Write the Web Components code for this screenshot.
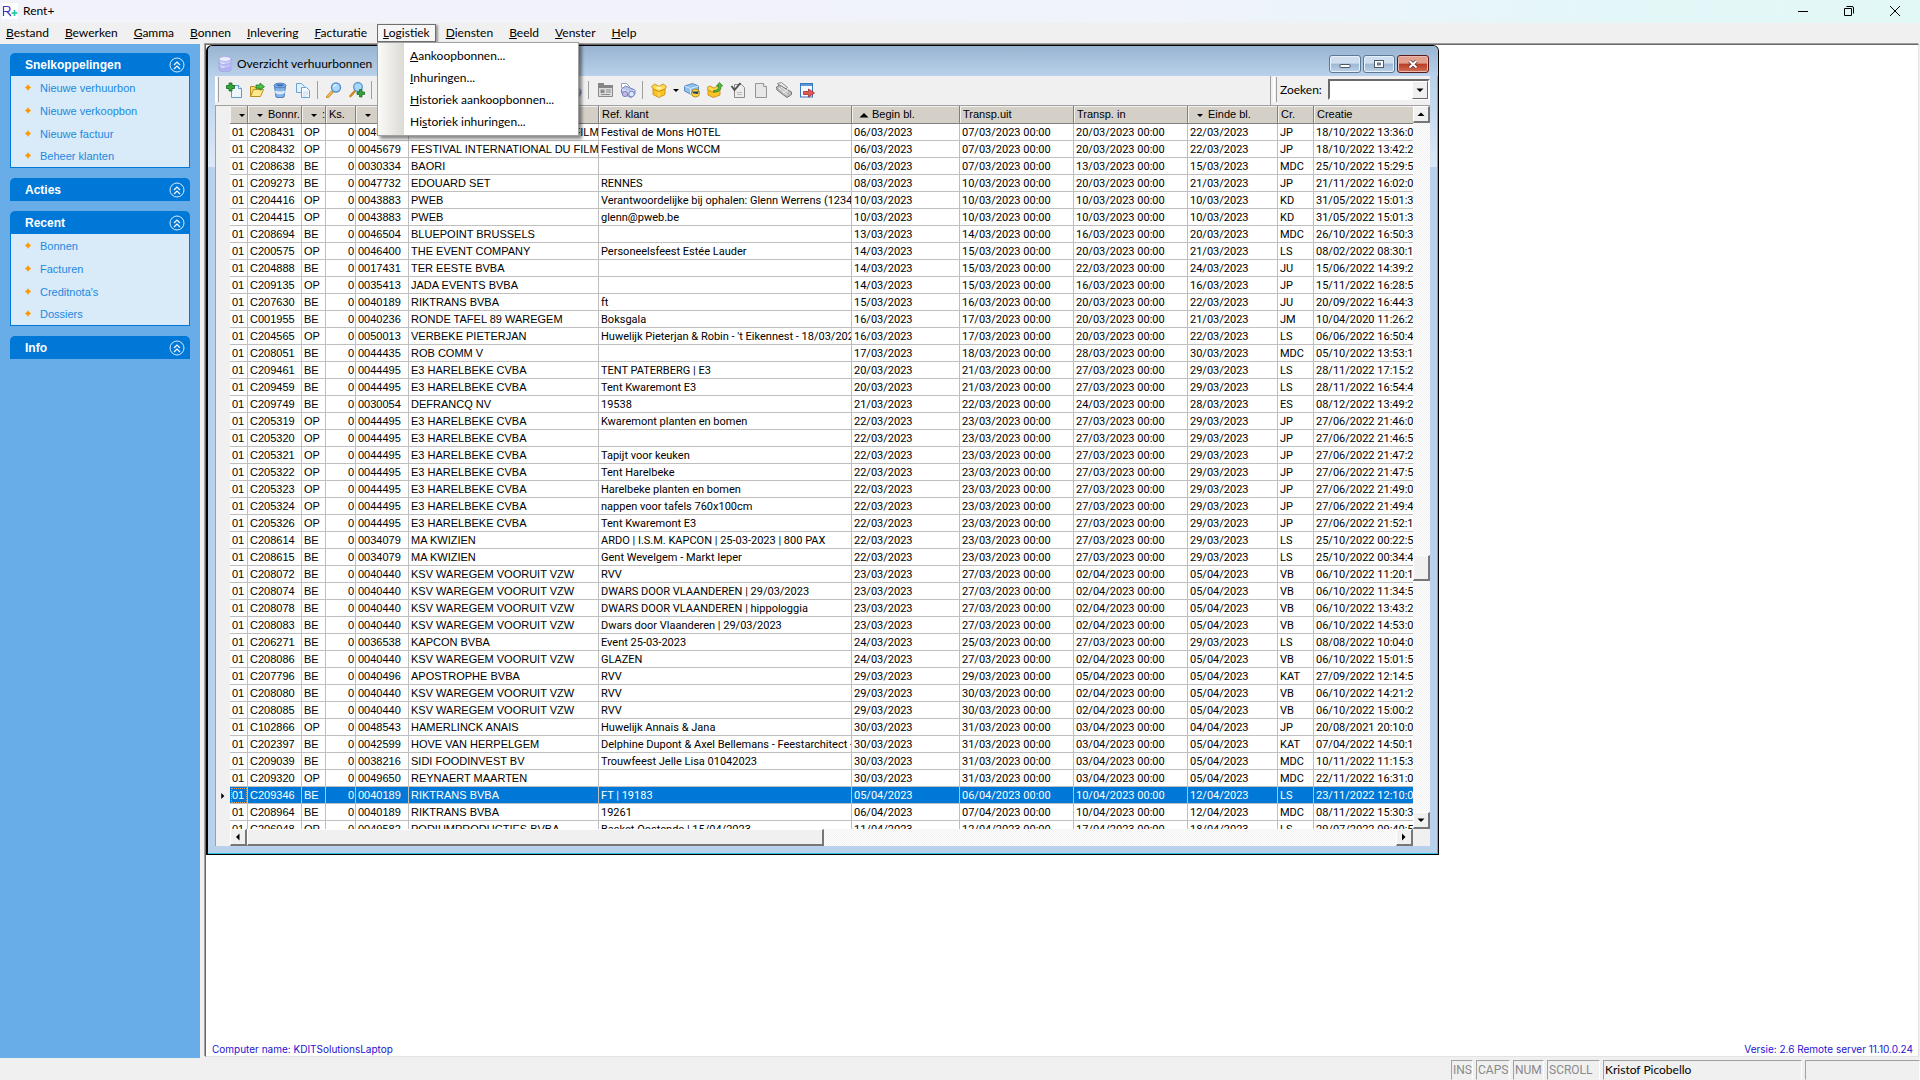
<!DOCTYPE html>
<html lang="nl">
<head>
<meta charset="utf-8">
<title>Rent+</title>
<style>
html, body { height: 100%; margin: 0; }
body { font: 12px/16px Lato, "Liberation Sans", sans-serif; color: #000; background: #f0f0f0; overflow: hidden; }
</style>
</head>
<body>
<rent-app></rent-app>
<script>
const define = (name, html, init) => {
  const template = document.createElement('template');
  template.innerHTML = html;
  customElements.define(name, class extends HTMLElement {
    constructor() {
      super();
      this.attachShadow({ mode: 'open' }).append(template.content.cloneNode(true));
    }
    connectedCallback() { if (init && !this.ready) { this.ready = true; init(this, this.shadowRoot); } }
  });
};

/* ---------- icons ---------- */
const ICONS = {
  logo: '<rect width="16" height="16" fill="#fff"/><g fill="none" stroke-width="1.2"><path d="M1.5 13V3.500h4a2.500 2.500 0 0 1 0 5h-4M5 8.500L9 13" stroke="#3b35c8"/><path d="M9.500 10h6M12.500 7v6" stroke="#1fc3a0" stroke-width="1.600"/></g>',
  db: '<g stroke="#9a9ce0" stroke-width=".6"><path d="M2 11v2.500c0 1.300 2.600 2.300 6 2.300s6-1 6-2.300V11z" fill="#b3b4f4"/><path d="M2 7v3c0 1.300 2.600 2.300 6 2.300s6-1 6-2.300V7z" fill="#bfc0f7"/><path d="M2 3v3c0 1.300 2.600 2.300 6 2.300s6-1 6-2.300V3z" fill="#c9caf9"/><ellipse cx="8" cy="3" rx="6" ry="2.400" fill="#ecedff"/></g><path d="M3.500 6.500c1 .7 2.500 1 4 1M3.500 10.500c1 .7 2.500 1 4 1" fill="none" stroke="#f3f3ff"/>',
  add: '<path d="M5.500 3.500h7l3 3v9h-10z" fill="#eef6fd" stroke="#5f9bd0"/><path d="M12.500 3.500v3h3" fill="#fff" stroke="#5f9bd0"/><path d="M3 1h3v2.500h2.500v3H6V9H3V6.500H.5v-3H3z" fill="#32a83a" stroke="#13661b" stroke-width=".8"/>',
  open: '<path d="M1.500 14.500V4.500h4l1 1.500h5v2" fill="#f7dc6c" stroke="#b78f1c"/><path d="M1.500 14.500l3-7h10l-3 7z" fill="#ffe98c" stroke="#b78f1c"/><path d="M7 3h4V1l4.500 3.700L11 8.200V6.200H7z" fill="#4fc04a" stroke="#1b7a22" stroke-width=".8"/>',
  bin: '<path d="M2.500 4l1.500 11c2 1 6 1 8 0l1.500-11z" fill="#86b4e8" stroke="#4577b8"/><path d="M3 8.500c3 1.200 7 1.200 10 0l-.4 3c-3 1-6 1-9.200 0z" fill="#dcebfa"/><ellipse cx="8" cy="3.500" rx="6" ry="2.300" fill="#8cbaf0" stroke="#4577b8"/><ellipse cx="8" cy="3.300" rx="4" ry="1.100" fill="#356cb5"/>',
  copy: '<path d="M1.500 1.500h5l3 3v6h-8z" fill="#e4f0fb" stroke="#6ba2d6"/><path d="M6.500 5.500h5l3 3v7h-8z" fill="#f3f9ff" stroke="#6ba2d6"/><path d="M8 10h5M8 12h5M8 14h3" stroke="#a9cbea" stroke-width=".7"/>',
  find: '<path d="M6.500 9.500L1.500 15" stroke="#c98a2c" stroke-width="3" stroke-linecap="round"/><path d="M6.500 9.500L1.500 15" stroke="#f5bd54" stroke-width="1.500"/><circle cx="10" cy="5.500" r="4.500" fill="#a9d8fa" stroke="#5791cc" stroke-width="1.400"/><path d="M7.500 5a3 3 0 0 1 3-2.500" stroke="#fff" fill="none"/>',
  findadd: '<path d="M6 9L1.500 14" stroke="#c98a2c" stroke-width="2.600" stroke-linecap="round"/><circle cx="9" cy="5" r="4.300" fill="#a9d8fa" stroke="#5791cc" stroke-width="1.300"/><path d="M10.500 7.500h2.500V10h2.500v2.500H13V15h-2.500v-2.500H8V10h2.500z" fill="#32a83a" stroke="#13661b" stroke-width=".7"/>',
  card: '<path d="M1.500 3.500V1.500h5v2h9v11h-14z" fill="#dcdcdc" stroke="#8a8a8a"/><path d="M1 1h6v2h9v3H1z" fill="#858585"/><rect x="3.500" y="7.500" width="4" height="3.500" fill="#8d8d8d"/><path d="M9 8h5M9 10h5M4 12.500h9" stroke="#8d8d8d"/>',
  print: '<path d="M1.500 1.500h5l3 3-4 3-4-2z" fill="#fff" stroke="#8b9fcb"/><path d="M1.500 7l4-3 9.500 4v4l-4 3.500L1.500 11z" fill="#b9c6ee" stroke="#7383bd"/><path d="M2 7.500l8.500 3.500 4-3" fill="none" stroke="#eef2ff"/><circle cx="5" cy="12" r="2.600" fill="#cdb6e4" stroke="#7383bd"/><circle cx="11.500" cy="12" r="2.800" fill="#dfe7fb" stroke="#7383bd"/>',
  box: '<path d="M2 7l6 2 6-2v5.500L8 15.500l-6-3z" fill="#f9c526" stroke="#c5830b" stroke-width=".8"/><path d="M2 7L.5 4.500 4 2l4 2.500L12 2l3.500 2.500L14 7 8 9.500z" fill="#ffd94d" stroke="#c5830b" stroke-width=".8"/><path d="M4 6l4-1.500L12 6 8 7.500z" fill="#fff5b5"/><path d="M8 10v5" stroke="#ffe583"/>',
  truck: '<path d="M.5 4l8-2.500 6 2.500v5l-8 3-6-3z" fill="#8fc1ee" stroke="#3f78b5" stroke-width=".8"/><path d="M.5 4l6 2.500 8-2.500M6.500 6.500V12" fill="none" stroke="#d7ebfb"/><circle cx="11.500" cy="11" r="4" fill="#ffd43c" stroke="#a87908" stroke-width=".8"/><path d="M8 9.500h7l-1.500 2.500h-2L11 11l-1 1z" fill="#17407e"/>',
  boxup: '<path d="M1 8l5.500 2L13 8v5l-6.500 2.500L1 13z" fill="#f9c526" stroke="#c5830b" stroke-width=".8"/><path d="M1 8L0 5.500 3 4l4 2 4-2 3 2-1 2-6.500 2.500z" fill="#ffd94d" stroke="#c5830b" stroke-width=".8"/><path d="M6.500 8.500c4 0 5-1.500 5-4.500H9.500L12.500.5 15.700 4H14c0 4-2.500 6.500-7.500 6z" fill="#53bd42" stroke="#217b1e" stroke-width=".7"/>',
  check: '<path d="M4.500 2.500h7l3 3v10h-10z" fill="#ededed" stroke="#8b8b8b"/><path d="M1.500 4l3 4 6-7" fill="none" stroke="#4e4e4e" stroke-width="1.800"/><path d="M7 10.500h5M7 12.500h5" stroke="#bbb"/>',
  page: '<path d="M2.500 1.500h8l3 3v11h-11z" fill="#e7e7e7" stroke="#969696"/><path d="M10.500 1.500v3h3" fill="#fff" stroke="#969696"/>',
  fax: '<path d="M1.500 1.500l4-1 6 5-4 3z" fill="#eee" stroke="#888"/><path d="M.5 5l3-2L15.500 10v2.500l-4.500 3L1 8z" fill="#bdbdbd" stroke="#737373"/><path d="M3 6l8 6.500M5 5l7 5M7 11l5-3.500" stroke="#f1f1f1"/>',
  exit: '<rect x="1.500" y="1.500" width="12" height="13.500" fill="#f4f9ff" stroke="#3b75bd"/><path d="M2 3h11" stroke="#5a97dd" stroke-width="2"/><path d="M4.500 9.500h5V7l6 4-6 4v-2.500h-5z" fill="#e25a54" stroke="#a62a27" stroke-width=".8"/>',
  chev: '<circle cx="8" cy="8" r="7" fill="none" stroke="#d8ecff"/><path d="M5 8l3-3 3 3M5 12l3-3 3 3" fill="none" stroke="#fff" stroke-width="1.200"/>',
  bullet: '<path d="M8 4.500l1.200 1.800L11 7.500 9.200 8.700 8 10.500 6.800 8.700 5 7.500l1.800-1.200z" fill="#ff9800" stroke="#ff9800" stroke-width=".3"/>',
  min: '<path d="M3 8.500h10" stroke="#000"/>',
  restore: '<path d="M3.500 5.500h7v7h-7z" fill="none" stroke="#000"/><path d="M5.500 3.500h5.500a1.500 1.500 0 0 1 1.500 1.500v5.500" fill="none" stroke="#000"/>',
  close: '<path d="M3 3l10 10M13 3L3 13" stroke="#000"/>',
  wmin: '<rect x="3" y="8.500" width="10" height="3" rx=".5" fill="#fff" stroke="#4b5668"/>',
  wmax: '<rect x="3.500" y="4.500" width="9" height="7" fill="#fff" stroke="#4b5668"/><rect x="6.500" y="7" width="3" height="2" fill="#8ea7c4" stroke="#4b5668" stroke-width=".8"/>',
  wclose: '<path d="M4.500 5l7 6.500M11.500 5l-7 6.500" stroke="#5b3038" stroke-width="3.600"/><path d="M4.500 5l7 6.500M11.500 5l-7 6.500" stroke="#fff" stroke-width="2"/>',
  down: '<path d="M5 7h6L8 10z" fill="#000"/>',
  sortup: '<path d="M3.500 10.500h9L8 6z" fill="#000"/>',
  arrup: '<path d="M4.500 10h7L8 6.500z" fill="#000"/>',
  arrdown: '<path d="M4.500 6.500h7L8 10z" fill="#000"/>',
  arrleft: '<path d="M9.500 4.500v7L6 8z" fill="#000"/>',
  arrright: '<path d="M6 4.500v7L9.500 8z" fill="#000"/>'
};
define('app-icon', `<style>:host{display:block;width:16px;height:16px;flex:none}svg{display:block;width:100%;height:100%}</style>`,
  (el, root) => root.append(new DOMParser().parseFromString(
    `<svg xmlns="http://www.w3.org/2000/svg" viewBox="0 0 16 16" aria-hidden="true">${ICONS[el.getAttribute('name')]}</svg>`, 'image/svg+xml').documentElement));

/* ---------- main window title ---------- */
define('title-bar', `<style>
:host{display:flex;align-items:center;height:23px;padding:0 2px 1px 0;box-sizing:border-box;background:linear-gradient(90deg,#f1f2fa 0 35%,#f0f3fa 60%,#e3f7f8 85%,#e2f8f6)}
.name{display:flex;align-items:center;gap:5px;padding-left:2px;flex:1}
.controls{display:flex}
button{width:46px;height:22px;border:0;background:none;display:grid;place-items:center;padding:0}
</style>
<div class="name"><app-icon name="logo"></app-icon><span>Rent+</span></div>
<div class="controls"><button aria-label="Minimaliseren"><app-icon name="min"></app-icon></button><button aria-label="Herstellen"><app-icon name="restore"></app-icon></button><button aria-label="Sluiten"><app-icon name="close"></app-icon></button></div>`);

/* ---------- menu bar ---------- */
define('menu-item', `<style>
:host{display:block;position:relative}
button{font:inherit;color:inherit;height:18px;line-height:16px;padding:0 5px;border:1px solid transparent;background:none;display:block;white-space:nowrap}
:host([open]) button{background:#f6f6f6;border-color:#6e6e6e;box-shadow:2px 1px 2px #999}
</style><button><slot></slot></button><slot name="menu"></slot>`);
define('menu-popup', `<style>
:host{position:absolute;left:0;top:18px;z-index:10;width:200px;border:1px solid #a0a0a0;background:linear-gradient(90deg,#fafaf8,#dcdad4 26px,#fff 26px);box-shadow:3px 3px 3px rgba(0,0,0,.45);padding:2px 0}
</style><slot></slot>`);
define('menu-option', `<style>
:host{display:block}
button{font:inherit;color:inherit;display:block;width:100%;height:22px;border:0;background:none;text-align:left;padding:0 0 0 32px}
</style><button><slot></slot></button>`);
define('menu-bar', `<style>
:host{display:flex;gap:4px;height:20px;background:#f0f0f0;align-items:center;border-bottom:1px solid #f0f0f0;box-sizing:border-box}
</style>
<menu-item><u>B</u>estand</menu-item><menu-item><u>B</u>ewerken</menu-item><menu-item><u>G</u>amma</menu-item><menu-item><u>B</u>onnen</menu-item><menu-item><u>I</u>nlevering</menu-item><menu-item><u>F</u>acturatie</menu-item>
<menu-item open><u>L</u>ogistiek
<menu-popup slot="menu"><menu-option><u>A</u>ankoopbonnen...</menu-option><menu-option><u>I</u>nhuringen...</menu-option><menu-option><u>H</u>istoriek aankoopbonnen...</menu-option><menu-option>Hi<u>s</u>toriek inhuringen...</menu-option></menu-popup></menu-item>
<menu-item><u>D</u>iensten</menu-item><menu-item><u>B</u>eeld</menu-item><menu-item><u>V</u>enster</menu-item><menu-item><u>H</u>elp</menu-item>`);

/* ---------- side panel ---------- */
define('side-group', `<style>
:host{display:block;font-family:"Liberation Sans",sans-serif}
header{display:flex;align-items:center;height:23px;padding:0 5px 0 15px;background:#0078d7;border-radius:5px 5px 0 0}
h2{flex:1;margin:0;font-size:12px;line-height:16px;color:#fff}
button{border:0;padding:0;background:none}
ul{margin:0;padding:0;list-style:none;border:1px solid #0078d7;border-top:0;background:#d9eaf8}
ul:empty{display:none}
li{display:flex;align-items:center;gap:4px;height:23px;padding-left:9px}
li:last-child{height:22px}
a{font-size:11px;line-height:16px;color:#2089df;text-decoration:none}
</style><header><h2></h2><button aria-label="Inklappen"><app-icon name="chev"></app-icon></button></header><ul></ul>`,
  (el, root) => {
    root.querySelector('h2').textContent = el.getAttribute('label');
    const items = el.getAttribute('items');
    if (items) root.querySelector('ul').innerHTML = items.split('|').map(t => `<li><app-icon name="bullet"></app-icon><a href="#">${t}</a></li>`).join('');
  });
define('side-panel', `<style>
:host{display:flex;flex-direction:column;gap:10px;width:200px;box-sizing:border-box;padding:9px 10px;background:#68ade8;flex:none}
</style>
<side-group label="Snelkoppelingen" items="Nieuwe verhuurbon|Nieuwe verkoopbon|Nieuwe factuur|Beheer klanten"></side-group>
<side-group label="Acties"></side-group>
<side-group label="Recent" items="Bonnen|Facturen|Creditnota's|Dossiers"></side-group>
<side-group label="Info"></side-group>`);

/* ---------- toolbar ---------- */
define('tool-bar', `<style>
:host{display:flex;height:29px;background:#f0f0f0}
.tools{display:flex;flex:1;align-items:center;padding:0 0 2px 2px}
.grip{width:1px;height:25px;border:solid #a0a0a0;border-width:0 1px 0 0;margin-right:3px;box-shadow:-2px 0 #fff}
.sep{width:1px;height:18px;margin:0 4px 0 3px;background:#a0a0a0}
button{width:23px;height:24px;padding:0;border:0;background:none;display:grid;place-items:center;place-content:center}
.rest{width:209px;display:flex;justify-content:flex-end}
.split{width:24px}
.drop{width:9px;overflow:hidden}
form{display:flex;align-items:center;width:160px;border-left:1px solid #a0a0a0;box-sizing:border-box;padding:0 0 2px 4px;margin:0}
form label{padding-right:5px;flex:1}
.combo{width:102px;height:21px;display:grid;box-sizing:border-box;border:2px solid;border-color:#6a6a6a #fff #fff #6a6a6a;background:#fff}
select{appearance:none;grid-area:1/1;border:0;background:#fff;font:inherit;padding:0 4px;border-radius:0;min-width:0}
.arrow{grid-area:1/1;justify-self:end;width:16px;box-sizing:border-box;background:#f0f0f0;border:1px solid;border-color:#fff #696969 #696969 #fff;display:grid;place-items:center;place-content:center;pointer-events:none}
</style>
<div class="tools"><span class="grip"></span>
<button aria-label="Nieuw"><app-icon name="add"></app-icon></button><button aria-label="Openen"><app-icon name="open"></app-icon></button><button aria-label="Verwijderen"><app-icon name="bin"></app-icon></button><button aria-label="Kopiëren"><app-icon name="copy"></app-icon></button><span class="sep"></span>
<button aria-label="Zoeken"><app-icon name="find"></app-icon></button><button aria-label="Zoeken en toevoegen"><app-icon name="findadd"></app-icon></button><span class="sep"></span>
<div class="rest"><button aria-label="Afdrukken"><app-icon name="print"></app-icon></button></div><span class="sep"></span>
<button aria-label="Kaart"><app-icon name="card"></app-icon></button><button aria-label="Alles afdrukken"><app-icon name="print"></app-icon></button><span class="sep"></span>
<button class="split" aria-label="Levering"><app-icon name="box"></app-icon></button><button class="drop" aria-label="Meer"><app-icon name="down"></app-icon></button><button aria-label="Transport"><app-icon name="truck"></app-icon></button><button aria-label="Retour"><app-icon name="boxup"></app-icon></button><button aria-label="Controle"><app-icon name="check"></app-icon></button><button aria-label="Document"><app-icon name="page"></app-icon></button><button aria-label="Fax"><app-icon name="fax"></app-icon></button><button aria-label="Afsluiten"><app-icon name="exit"></app-icon></button>
</div>
<form><span class="grip"></span><label for="q">Zoeken:</label><div class="combo"><select id="q"><option></option></select><span class="arrow"><app-icon name="arrdown"></app-icon></span></div></form>`);

/* ---------- scroll bars ---------- */
define('scroll-bar', `<style>
:host{display:flex;background:conic-gradient(#f0f0f0 25%,#fff 0 50%,#f0f0f0 0 75%,#fff 0) 0 0/2px 2px}
:host([vertical]){flex-direction:column}
button,i{flex:none;box-sizing:border-box;width:17px;height:17px;padding:0;background:#f0f0f0;border:solid;border-width:1px 2px 2px 1px;border-color:#fff #777 #777 #fff;display:grid;place-items:center;place-content:center;overflow:hidden}
.before{flex:var(--before)}.thumb{flex:var(--thumb);width:auto;height:auto}.after{flex:var(--after)}
span{min-width:0;min-height:0}
</style><button aria-label="Terug"><app-icon></app-icon></button><span class="before"></span><i class="thumb"></i><span class="after"></span><button aria-label="Verder"><app-icon></app-icon></button>`,
  (el, root) => {
    const v = el.hasAttribute('vertical');
    root.querySelectorAll('button').forEach((b, i) => b.innerHTML = `<app-icon name="${v ? ['arrup', 'arrdown'][i] : ['arrleft', 'arrright'][i]}"></app-icon>`);
  });

/* ---------- data grid ---------- */
const E3 = '0044495;E3 HARELBEKE CVBA', KSV = '0040440;KSV WAREGEM VOORUIT VZW', FIF = '0045679;FESTIVAL INTERNATIONAL DU FILM';
const ROWS = `C208431;OP;${FIF};Festival de Mons HOTEL;06/03;07/03;20/03;22/03;JP;18/10/2022 13:36:0
C208432;OP;${FIF};Festival de Mons WCCM;06/03;07/03;20/03;22/03;JP;18/10/2022 13:42:2
C208638;BE;0030334;BAORI;;06/03;07/03;13/03;15/03;MDC;25/10/2022 15:29:5
C209273;BE;0047732;EDOUARD SET;RENNES;08/03;10/03;20/03;21/03;JP;21/11/2022 16:02:0
C204416;OP;0043883;PWEB;Verantwoordelijke bij ophalen: Glenn Werrens (12345;10/03;10/03;10/03;10/03;KD;31/05/2022 15:01:3
C204415;OP;0043883;PWEB;glenn@pweb.be;10/03;10/03;10/03;10/03;KD;31/05/2022 15:01:3
C208694;BE;0046504;BLUEPOINT BRUSSELS;;13/03;14/03;16/03;20/03;MDC;26/10/2022 16:50:3
C200575;OP;0046400;THE EVENT COMPANY;Personeelsfeest Estée Lauder;14/03;15/03;20/03;21/03;LS;08/02/2022 08:30:1
C204888;BE;0017431;TER EESTE BVBA;;14/03;15/03;22/03;24/03;JU;15/06/2022 14:39:2
C209135;OP;0035413;JADA EVENTS BVBA;;14/03;15/03;16/03;16/03;JP;15/11/2022 16:28:5
C207630;BE;0040189;RIKTRANS BVBA;ft;15/03;16/03;20/03;22/03;JU;20/09/2022 16:44:3
C001955;BE;0040236;RONDE TAFEL 89 WAREGEM;Boksgala;16/03;17/03;20/03;21/03;JM;10/04/2020 11:26:2
C204565;OP;0050013;VERBEKE PIETERJAN;Huwelijk Pieterjan & Robin - 't Eikennest - 18/03/202;16/03;17/03;20/03;22/03;LS;06/06/2022 16:50:4
C208051;BE;0044435;ROB COMM V;;17/03;18/03;28/03;30/03;MDC;05/10/2022 13:53:1
C209461;BE;${E3};TENT PATERBERG | E3;20/03;21/03;27/03;29/03;LS;28/11/2022 17:15:2
C209459;BE;${E3};Tent Kwaremont E3;20/03;21/03;27/03;29/03;LS;28/11/2022 16:54:4
C209749;BE;0030054;DEFRANCQ NV;19538;21/03;22/03;24/03;28/03;ES;08/12/2022 13:49:2
C205319;OP;${E3};Kwaremont planten en bomen;22/03;23/03;27/03;29/03;JP;27/06/2022 21:46:0
C205320;OP;${E3};;22/03;23/03;27/03;29/03;JP;27/06/2022 21:46:5
C205321;OP;${E3};Tapijt voor keuken;22/03;23/03;27/03;29/03;JP;27/06/2022 21:47:2
C205322;OP;${E3};Tent Harelbeke;22/03;23/03;27/03;29/03;JP;27/06/2022 21:47:5
C205323;OP;${E3};Harelbeke planten en bomen;22/03;23/03;27/03;29/03;JP;27/06/2022 21:49:0
C205324;OP;${E3};nappen voor tafels 760x100cm;22/03;23/03;27/03;29/03;JP;27/06/2022 21:49:4
C205326;OP;${E3};Tent Kwaremont E3;22/03;23/03;27/03;29/03;JP;27/06/2022 21:52:1
C208614;BE;0034079;MA KWIZIEN;ARDO | I.S.M. KAPCON | 25-03-2023 | 800 PAX;22/03;23/03;27/03;29/03;LS;25/10/2022 00:22:5
C208615;BE;0034079;MA KWIZIEN;Gent Wevelgem - Markt Ieper;22/03;23/03;27/03;29/03;LS;25/10/2022 00:34:4
C208072;BE;${KSV};RVV;23/03;27/03;02/04;05/04;VB;06/10/2022 11:20:1
C208074;BE;${KSV};DWARS DOOR VLAANDEREN | 29/03/2023;23/03;27/03;02/04;05/04;VB;06/10/2022 11:34:5
C208078;BE;${KSV};DWARS DOOR VLAANDEREN | hippologgia;23/03;27/03;02/04;05/04;VB;06/10/2022 13:43:2
C208083;BE;${KSV};Dwars door Vlaanderen | 29/03/2023;23/03;27/03;02/04;05/04;VB;06/10/2022 14:53:0
C206271;BE;0036538;KAPCON BVBA;Event 25-03-2023;24/03;25/03;27/03;29/03;LS;08/08/2022 10:04:0
C208086;BE;${KSV};GLAZEN;24/03;27/03;02/04;05/04;VB;06/10/2022 15:01:5
C207796;BE;0040496;APOSTROPHE BVBA;RVV;29/03;29/03;05/04;05/04;KAT;27/09/2022 12:14:5
C208080;BE;${KSV};RVV;29/03;30/03;02/04;05/04;VB;06/10/2022 14:21:2
C208085;BE;${KSV};RVV;29/03;30/03;02/04;05/04;VB;06/10/2022 15:00:2
C102866;OP;0048543;HAMERLINCK ANAIS;Huwelijk Annais & Jana;30/03;31/03;03/04;04/04;JP;20/08/2021 20:10:0
C202397;BE;0042599;HOVE VAN HERPELGEM;Delphine Dupont & Axel Bellemans - Feestarchitect -;30/03;31/03;03/04;05/04;KAT;07/04/2022 14:50:1
C209039;BE;0038216;SIDI FOODINVEST BV;Trouwfeest Jelle Lisa 01042023;30/03;31/03;03/04;05/04;MDC;10/11/2022 11:15:3
C209320;OP;0049650;REYNAERT MAARTEN;;30/03;31/03;03/04;05/04;MDC;22/11/2022 16:31:0
C209346;BE;0040189;RIKTRANS BVBA;FT | 19183;05/04;06/04;10/04;12/04;LS;23/11/2022 12:10:0
C208964;BE;0040189;RIKTRANS BVBA;19261;06/04;07/04;10/04;12/04;MDC;08/11/2022 15:30:3
C206048;OP;0049582;PODIUMPRODUCTIES BVBA;Basket Oostende | 15/04/2023;11/04;12/04;17/04;18/04;LS;29/07/2022 09:40:5`;
define('data-grid', `<style>
:host{display:grid;grid-template-columns:minmax(0,1fr) 17px;grid-template-rows:minmax(0,1fr) 17px;border:1px solid #a0a0a0;border-width:1px 0 0 1px;background:#f0f0f0;font:11px/16px "Liberation Sans",sans-serif;min-height:0}
.view{overflow:hidden}
table{border-collapse:separate;border-spacing:0;table-layout:fixed;width:100%}
th,td{height:17px;box-sizing:border-box;padding:0 0 0 2px;border:solid #bfbfbf;border-width:0 1px 1px 0;overflow:hidden;white-space:nowrap;font-weight:400;text-align:left;background:#fff;line-height:15px}
th{height:18px;background:#d4d0c8;border-color:#808080;box-shadow:inset 1px 1px #f4f2ee;padding-left:3px}
th:last-child,td:last-child{border-right:0}
th:first-child,td:first-child{background:#f0f0f0;border:0;box-shadow:none;padding:0}
th div{display:flex;align-items:center;height:16px}
th div.sort{padding-left:1px}
.num{text-align:right;padding:0 1px 0 0}
td:nth-child(n+8){font-family:Roboto,sans-serif}
.sel td:not(:first-child){background:#0078d7;color:#fff}
.sel td:first-child app-icon{width:14px}
.sel td:nth-child(2){outline:1px dotted #e8a050;outline-offset:-2px}
scroll-bar.v{--before:432;--thumb:23;--after:231}
scroll-bar.h{--before:0;--thumb:575;--after:574;margin-left:14px}
</style>
<div class="view"><table><colgroup></colgroup><thead><tr></tr></thead><tbody></tbody></table></div>
<scroll-bar class="v" vertical></scroll-bar><scroll-bar class="h"></scroll-bar>`,
  (el, root) => {
    const widths = [14, 18, 54, 24, 30, 53, 190, 253, 108, 114, 114, 90, 36, 0];
    root.querySelector('colgroup').innerHTML = widths.map(w => w ? `<col style="width:${w}px">` : '<col>').join('');
    const heads = [['', ''], ['', 'down'], ['Bonnr.', 'down'], [':', 'down'], ['Ks.', ''], ['', 'down'], ['', ''], ['Ref. klant', ''], ['Begin bl.', 'sortup'], ['Transp.uit', ''], ['Transp. in', ''], ['Einde bl.', 'down'], ['Cr.', ''], ['Creatie', '']];
    root.querySelector('thead tr').innerHTML = heads.map(([t, i]) => `<th><div${i ? ' class="sort"' : ''}>${i ? `<app-icon name="${i}"></app-icon>` : ''}${t}</div></th>`).join('');
    root.querySelector('tbody').innerHTML = ROWS.split('\n').map(line => {
      const [nr, type, cust, name, ref, a, b, c, d, cr, made] = line.split(';');
      const cur = nr === 'C209346';
      const cells = ['01', nr, type, '0', cust, name, ref.replace('&', '&amp;'), a + '/2023', b + '/2023 00:00', c + '/2023 00:00', d + '/2023', cr, made];
      return `<tr${cur ? ' class="sel"' : ''}><td>${cur ? '<app-icon name="arrright"></app-icon>' : ''}</td>${cells.map((t, i) => `<td${i === 3 ? ' class="num"' : ''}>${t}</td>`).join('')}</tr>`;
    }).join('');
  });

/* ---------- child window ---------- */
define('child-window', `<style>
:host{display:flex;flex-direction:column;box-sizing:border-box;border:solid #000;border-width:1px 1px 1px 2px;border-radius:6px 6px 0 0;background:linear-gradient(#b9d1ea 30px,#dce8f6 121px,#b9d1ea 121px);box-shadow:inset -1px -1px #31c0e0;padding:0 8px 8px 7px;overflow:hidden}
header{display:flex;align-items:center;height:30px;flex:none;margin:0 -8px 0 -7px;padding:0 9px 0 9px;background:linear-gradient(#99b4d1,#b9d1ea);box-sizing:border-box}
.name{display:flex;gap:4px;align-items:center;flex:1;padding-top:5px}
.ctl{display:flex;gap:2px;padding-top:6px}
button{width:32px;height:18px;box-sizing:border-box;padding:0;border:1px solid #5d7894;border-radius:3px;background:linear-gradient(#cfdfef 45%,#9db8d5 50%,#bdd2e8);box-shadow:inset 0 0 0 1px #e6f0fa;display:grid;place-items:center}
button.x{border-color:#5a1a1c;background:linear-gradient(#e2a090 45%,#bc3b24 50%,#d4705a);box-shadow:inset 0 0 0 1px #eab9ac}
.body{flex:1;display:flex;flex-direction:column;min-height:0}
data-grid{flex:1}
</style>
<header><div class="name"><app-icon name="db"></app-icon><span><slot></slot></span></div><div class="ctl"><button aria-label="Minimaliseren"><app-icon name="wmin"></app-icon></button><button aria-label="Maximaliseren"><app-icon name="wmax"></app-icon></button><button class="x" aria-label="Sluiten"><app-icon name="wclose"></app-icon></button></div></header>
<div class="body"><tool-bar></tool-bar><data-grid></data-grid></div>`);

/* ---------- workspace and status ---------- */
define('work-space', `<style>
:host{flex:1;display:flex;flex-direction:column;justify-content:flex-end;position:relative;background:#fff;border:1px solid;border-color:#696969 #e3e3e3 #e3e3e3 #696969;box-shadow:-1px -1px #a0a0a0;margin:0 1px 1px 5px;min-width:0}
child-window{position:absolute;left:0;top:0;width:1233px;height:810px}
footer{display:flex;justify-content:space-between;padding:0 5px 0 6px;font:10px/14px Inter,sans-serif;color:#2412d0}
</style>
<child-window>Overzicht verhuurbonnen</child-window>
<footer><span>Computer name: KDITSolutionsLaptop</span><span>Versie: 2.6 Remote server 11.10.0.24</span></footer>`);
define('status-bar', `<style>
:host{display:flex;justify-content:flex-end;gap:3px;height:22px;box-sizing:border-box;padding-top:2px;background:#f0f0f0;flex:none}
span{box-sizing:border-box;border:1px solid;border-color:#a0a0a0 #fff #f0f0f0 #a0a0a0;padding-left:1px;line-height:18px;white-space:nowrap}
.key{color:#8a8a8a;font-family:Roboto,sans-serif}
.ins{width:22px}.caps{width:34px}.num{width:31px}.scroll{width:53px}.user{width:199px}.rest{width:115px}
</style>
<span class="key ins">INS</span><span class="key caps">CAPS</span><span class="key num">NUM</span><span class="key scroll">SCROLL</span><span class="user">Kristof Picobello</span><span class="rest"></span>`);
define('rent-app', `<style>
:host{display:flex;flex-direction:column;height:100vh}
main{flex:1;display:flex;min-height:0;padding-top:1px}
</style><title-bar></title-bar><menu-bar></menu-bar><main><side-panel></side-panel><work-space></work-space></main><status-bar></status-bar>`);
</script>
</body>
</html>
